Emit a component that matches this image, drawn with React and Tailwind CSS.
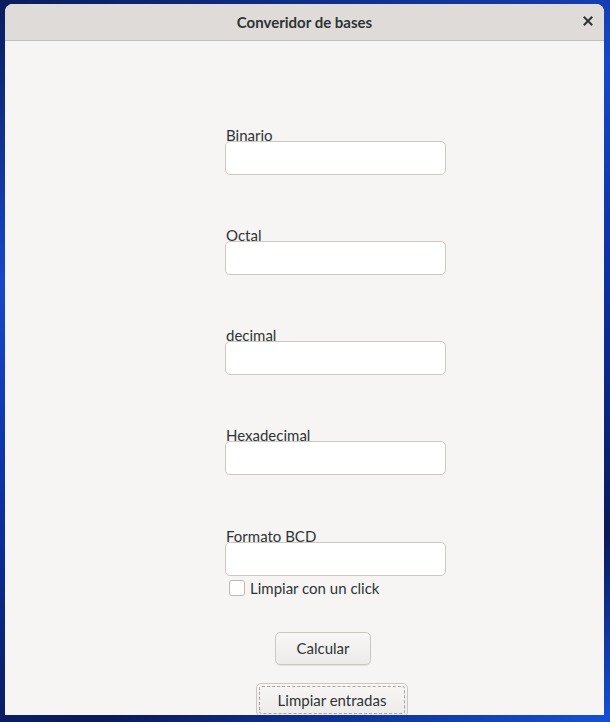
export default function App() {
    const fields = ['Binario', 'Octal', 'decimal', 'Hexadecimal', 'Formato BCD'];

    return (
        <div
            className="w-[610px] h-[722px] overflow-hidden bg-[linear-gradient(160deg,#0a1d5c_0%,#1747c9_30%,#0b2f9e_55%,#0a1a5a_80%,#1450d8_100%)] pt-[4px] pl-[5px]"
            style={{ fontFamily: 'Lato, "Noto Sans", sans-serif' }}
        >
            {/* Window */}
            <div className="w-[599px] h-[711px] rounded-t-[8px] overflow-hidden bg-[#f6f5f4] flex flex-col text-[#2e3436]">
                {/* Title bar */}
                <header className="h-[37px] shrink-0 relative flex items-center justify-center bg-[#dedbd8] border-b border-[#c0bdb8]">
                    <span className="text-[15px] font-bold leading-none">Converidor de bases</span>
                    <button className="absolute right-[8px] top-[9px] w-[16px] h-[16px] flex items-center justify-center">
                        <svg width="10" height="10" viewBox="0 0 10 10">
                            <path d="M1.5 1.5L8.5 8.5M8.5 1.5L1.5 8.5" stroke="#2e3436" strokeWidth="2" strokeLinecap="square" />
                        </svg>
                    </button>
                </header>

                {/* Content */}
                <main className="flex flex-col pl-[220px] pt-[85px]">
                    {fields.map((label, i) => (
                        <div
                            key={label}
                            className={i === 0 ? 'flex flex-col' : i === 4 ? 'flex flex-col mt-[52px]' : 'flex flex-col mt-[51px]'}
                        >
                            <label className="text-[15px] leading-[18px] pl-[1px]">{label}</label>
                            <input
                                type="text"
                                className="-mt-[3px] w-[221px] h-[34px] rounded-[5px] bg-white border border-[#cdc7c2] outline-none px-2"
                            />
                        </div>
                    ))}

                    {/* Checkbox */}
                    <label className="mt-[3px] ml-[4px] flex items-center gap-[5px] h-[18px]">
                        <span className="w-[16px] h-[16px] rounded-[3px] border border-[#c0bab4] bg-white" />
                        <span className="text-[15px] leading-[18px]">Limpiar con un click</span>
                    </label>

                    {/* Buttons */}
                    <button className="mt-[35px] ml-[50px] w-[96px] h-[33px] rounded-[5px] border border-[#cdc7c2] bg-[linear-gradient(#f8f7f6,#edebe9)] text-[15px] shadow-[0_1px_0_rgba(0,0,0,0.07)]">
                        Calcular
                    </button>
                    <button className="mt-[18px] ml-[31px] w-[152px] h-[34px] rounded-[5px] border border-[#cdc7c2] bg-[linear-gradient(#f8f7f6,#edebe9)] text-[15px] p-[2px]">
                        <span className="flex items-center justify-center w-full h-full rounded-[3px] border border-dashed border-[#a8a39e]">
                            Limpiar entradas
                        </span>
                    </button>
                </main>
            </div>
        </div>
    );
}
